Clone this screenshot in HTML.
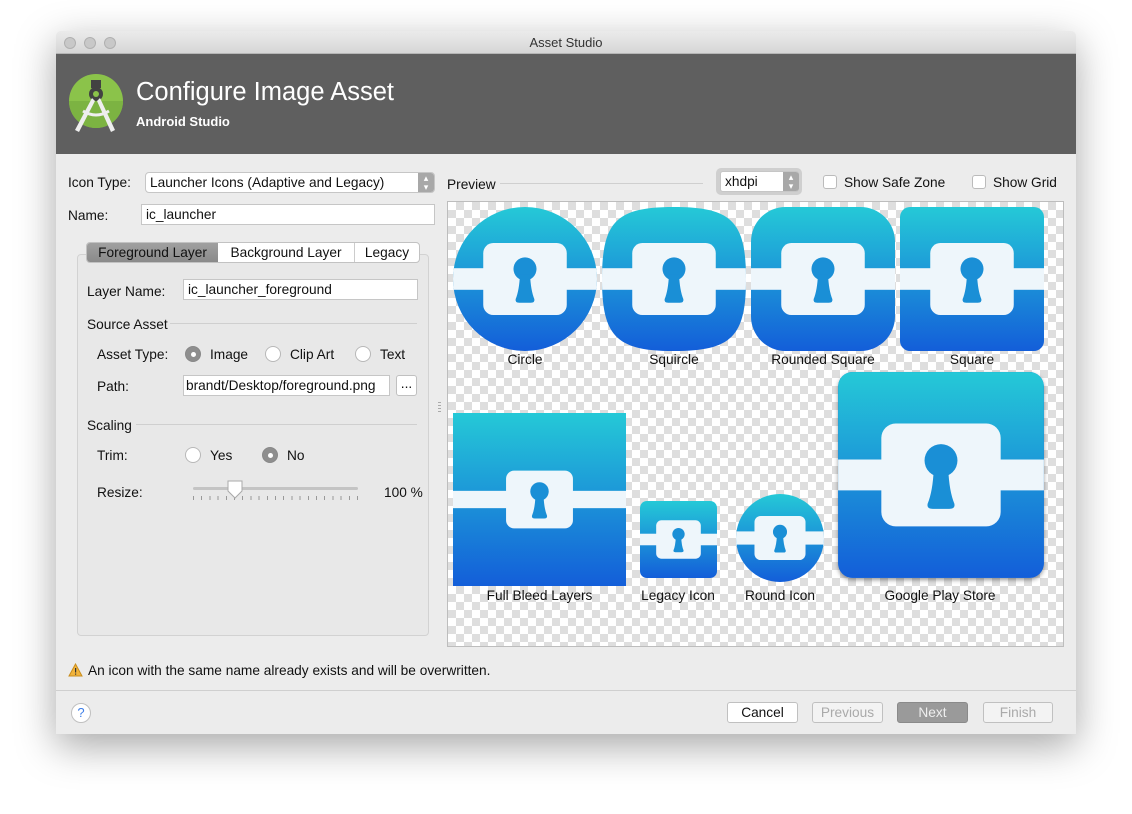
<!DOCTYPE html>
<html><head><meta charset="utf-8"><style>
*{box-sizing:border-box;margin:0;padding:0}
body{width:1132px;height:814px;background:#fff;font-family:"Liberation Sans",sans-serif;font-size:13.7px;color:#111;position:relative;overflow:hidden}
.a{position:absolute}
.win{left:56px;top:31px;width:1020px;height:703px;background:#ececec;box-shadow:0 12px 40px rgba(0,0,0,.35);border-radius:5px 5px 0 0;overflow:hidden}
.tb{left:0;top:0;width:1020px;height:23px;background:linear-gradient(#ebebeb,#d6d6d6);border-bottom:1px solid #b5b5b5;text-align:center;line-height:23px;color:#333;font-size:13px}
.dot{width:12px;height:12px;border-radius:50%;background:#c8c8c8;border:1px solid #b0b0b0;top:6px}
.hdr{left:0;top:23px;width:1020px;height:100px;background:#5f5f5f}
.inp{background:#fff;border:1px solid #c6c6c6;height:21px;line-height:19px;padding-left:4px}
.chk{background:conic-gradient(#dedede 25%,#fff 0 50%,#dedede 0 75%,#fff 0) 0 0/16px 16px}
.radio{width:16px;height:16px;border-radius:50%;background:#fff;border:1px solid #b8b8b8}
.radio.on{background:#8e8e8e;border-color:#888}
.radio.on::after{content:"";position:absolute;left:5px;top:5px;width:5px;height:5px;border-radius:50%;background:#fff}
.btn{height:21px;border:1px solid #c0c0c0;border-radius:3px;background:#fff;text-align:center;line-height:19px}
.lbl{text-align:center}
.sep{height:1px;background:#cfcfcf}
</style></head><body>
<svg width="0" height="0" style="position:absolute">
<defs>
<linearGradient id="g" x1="0" y1="0" x2="0" y2="1"><stop offset="0" stop-color="#25c9d7"/><stop offset="1" stop-color="#135ed9"/></linearGradient>
<g id="fg">
<rect x="-30" y="42.5" width="160" height="15" fill="#eef6fb"/>
<rect x="21" y="25" width="58" height="50" rx="7" fill="#eef6fb"/>
<circle cx="50" cy="43" r="8" fill="#1a8fd6"/>
<path d="M46.5,47 Q46,58 43.5,64 Q43,66.5 46,66.5 L54,66.5 Q57,66.5 56.5,64 Q54,58 53.5,47Z" fill="#1a8fd6"/>
</g>
</defs></svg>

<div class="a win">
 <div class="a tb">Asset Studio</div>
 <div class="a dot" style="left:8px"></div><div class="a dot" style="left:28px"></div><div class="a dot" style="left:48px"></div>
 <div class="a hdr">
  <svg class="a" style="left:13px;top:20px" width="56" height="60" viewBox="0 0 56 60">
   <circle cx="27" cy="27" r="27" fill="#8bc34a"/>
   <path d="M0,27 A27,27 0 0 0 54,27Z" fill="#7cb342"/>
   <rect x="22" y="6" width="10" height="8" fill="#424242"/>
   <circle cx="27" cy="20" r="7" fill="#424242"/><circle cx="27" cy="20" r="3" fill="#8bc34a"/>
   <path d="M23,24 L6,56 L10,58 L26,27Z M31,24 L46,56 L42,58 L28,27Z" fill="#eee"/>
   <path d="M14,37 Q27,45 40,37" stroke="#eee" stroke-width="3" fill="none"/>
  </svg>
  <div class="a" style="left:80px;top:24px;font-size:25.5px;color:#fff">Configure Image Asset</div>
  <div class="a" style="left:80px;top:60px;font-size:13px;color:#fff;font-weight:bold">Android Studio</div>
 </div>
</div>

<!-- left form -->
<div class="a" style="left:68px;top:175px">Icon Type:</div>
<div class="a inp" style="left:145px;top:172px;width:290px;border-radius:4px">Launcher Icons (Adaptive and Legacy)</div>
<div class="a" style="left:418px;top:173px;width:16px;height:19px;background:#a8a8a8;border-radius:0 3px 3px 0;color:#fff;font-size:9px;text-align:center;line-height:9px;padding-top:1px">▴<br>▾</div>
<div class="a" style="left:68px;top:208px">Name:</div>
<div class="a inp" style="left:141px;top:204px;width:294px">ic_launcher</div>

<div class="a" style="left:77px;top:254px;width:352px;height:382px;border:1px solid #d2d2d2;border-radius:4px;background:#e8e8e8"></div>
<div class="a" style="left:86px;top:242px;width:334px;height:21px;border:1px solid #c2c2c2;border-radius:4px;background:#fff;overflow:hidden">
 <div class="a" style="left:0;top:0;width:131px;height:19px;color:#111;text-align:center;line-height:19px;background:linear-gradient(#a0a0a0,#8a8a8a)">Foreground Layer</div>
 <div class="a" style="left:131px;top:0;width:137px;height:19px;text-align:center;line-height:19px;border-right:1px solid #ccc">Background Layer</div>
 <div class="a" style="left:268px;top:0;width:64px;height:19px;text-align:center;line-height:19px">Legacy</div>
</div>
<div class="a" style="left:87px;top:284px">Layer Name:</div>
<div class="a inp" style="left:183px;top:279px;width:235px">ic_launcher_foreground</div>
<div class="a" style="left:87px;top:317px">Source Asset</div>
<div class="a sep" style="left:170px;top:323px;width:247px"></div>
<div class="a" style="left:97px;top:347px">Asset Type:</div>
<div class="a radio on" style="left:185px;top:346px"></div><div class="a" style="left:210px;top:347px">Image</div>
<div class="a radio" style="left:265px;top:346px"></div><div class="a" style="left:290px;top:347px">Clip Art</div>
<div class="a radio" style="left:355px;top:346px"></div><div class="a" style="left:380px;top:347px">Text</div>
<div class="a" style="left:97px;top:379px">Path:</div>
<div class="a inp" style="left:183px;top:375px;width:207px;padding-left:2px;overflow:hidden;white-space:nowrap">brandt/Desktop/foreground.png</div>
<div class="a btn" style="left:396px;top:375px;width:21px;line-height:16px">...</div>
<div class="a" style="left:87px;top:418px">Scaling</div>
<div class="a sep" style="left:136px;top:424px;width:281px"></div>
<div class="a" style="left:97px;top:448px">Trim:</div>
<div class="a radio" style="left:185px;top:447px"></div><div class="a" style="left:210px;top:448px">Yes</div>
<div class="a radio on" style="left:262px;top:447px"></div><div class="a" style="left:287px;top:448px">No</div>
<div class="a" style="left:97px;top:485px">Resize:</div>
<div class="a" style="left:193px;top:487px;width:165px;height:3px;background:#c4c4c4;border-radius:2px"></div>
<div class="a" style="left:193px;top:496px;width:165px;height:4px;background:repeating-linear-gradient(90deg,#999 0 1px,transparent 1px 8.2px)"></div>
<svg class="a" style="left:226px;top:480px" width="18" height="20"><path d="M2,1 H16 V11 L9,18 L2,11Z" fill="#fff" stroke="#aaa"/></svg>
<div class="a" style="left:384px;top:485px">100 %</div>

<!-- preview header -->
<div class="a" style="left:447px;top:177px">Preview</div>
<div class="a sep" style="left:500px;top:183px;width:203px"></div>
<div class="a" style="left:716px;top:168px;width:86px;height:27px;background:#cfcfcf;border-radius:5px"></div>
<div class="a inp" style="left:720px;top:171px;width:79px;border-radius:3px">xhdpi</div>
<div class="a" style="left:783px;top:172px;width:16px;height:19px;background:#a8a8a8;border-radius:0 3px 3px 0;color:#fff;font-size:9px;text-align:center;line-height:9px;padding-top:1px">▴<br>▾</div>
<div class="a" style="left:823px;top:175px;width:14px;height:14px;background:#fff;border:1px solid #bbb;border-radius:3px"></div>
<div class="a" style="left:844px;top:175px">Show Safe Zone</div>
<div class="a" style="left:972px;top:175px;width:14px;height:14px;background:#fff;border:1px solid #bbb;border-radius:3px"></div>
<div class="a" style="left:993px;top:175px">Show Grid</div>

<div class="a chk" style="left:447px;top:201px;width:617px;height:446px;border:1px solid #bdbdbd"></div>
<div class="a" style="left:438px;top:402px;width:3px;height:12px;background:repeating-linear-gradient(#aaa 0 1px,transparent 1px 3px)"></div>

<!-- icons -->
<svg class="a" style="left:453px;top:207px" width="144" height="144" viewBox="0 0 100 100"><clipPath id="c1"><circle cx="50" cy="50" r="50"/></clipPath><g clip-path="url(#c1)"><rect width="100" height="100" fill="url(#g)"/><use href="#fg"/></g></svg>
<svg class="a" style="left:602px;top:207px" width="144" height="144" viewBox="0 0 100 100"><clipPath id="c2"><path d="M50,0 C90,0 100,10 100,50 C100,90 90,100 50,100 C10,100 0,90 0,50 C0,10 10,0 50,0Z"/></clipPath><g clip-path="url(#c2)"><rect width="100" height="100" fill="url(#g)"/><use href="#fg"/></g></svg>
<svg class="a" style="left:751px;top:207px" width="144" height="144" viewBox="0 0 100 100"><clipPath id="c3"><rect width="100" height="100" rx="24"/></clipPath><g clip-path="url(#c3)"><rect width="100" height="100" fill="url(#g)"/><use href="#fg"/></g></svg>
<svg class="a" style="left:900px;top:207px" width="144" height="144" viewBox="0 0 100 100"><clipPath id="c4"><rect width="100" height="100" rx="7"/></clipPath><g clip-path="url(#c4)"><rect width="100" height="100" fill="url(#g)"/><use href="#fg"/></g></svg>
<div class="a lbl" style="left:453px;top:352px;width:144px">Circle</div>
<div class="a lbl" style="left:602px;top:352px;width:144px">Squircle</div>
<div class="a lbl" style="left:751px;top:352px;width:144px">Rounded Square</div>
<div class="a lbl" style="left:900px;top:352px;width:144px">Square</div>

<svg class="a" style="left:453px;top:413px" width="173" height="173" viewBox="-25 -25 150 150"><clipPath id="c8"><rect x="-25" y="-25" width="150" height="150"/></clipPath><g clip-path="url(#c8)"><rect x="-25" y="-25" width="150" height="150" fill="url(#g)"/><use href="#fg"/></g></svg>
<svg class="a" style="left:640px;top:501px" width="77" height="77" viewBox="0 0 100 100"><clipPath id="c5"><rect width="100" height="100" rx="9"/></clipPath><g clip-path="url(#c5)"><rect width="100" height="100" fill="url(#g)"/><use href="#fg"/></g></svg>
<svg class="a" style="left:736px;top:494px" width="88" height="88" viewBox="0 0 100 100"><clipPath id="c6"><circle cx="50" cy="50" r="50"/></clipPath><g clip-path="url(#c6)"><rect width="100" height="100" fill="url(#g)"/><use href="#fg"/></g></svg>
<svg class="a" style="left:834px;top:370px" width="214" height="214" viewBox="-2 -1 104 104"><defs><filter id="sh"><feDropShadow dx="0" dy="1" stdDeviation="1" flood-opacity=".4"/></filter></defs><clipPath id="c7"><rect width="100" height="100" rx="7"/></clipPath><rect width="100" height="100" rx="7" fill="#1565d8" filter="url(#sh)"/><g clip-path="url(#c7)"><rect width="100" height="100" fill="url(#g)"/><use href="#fg"/></g></svg>
<div class="a lbl" style="left:453px;top:588px;width:173px">Full Bleed Layers</div>
<div class="a lbl" style="left:628px;top:588px;width:100px">Legacy Icon</div>
<div class="a lbl" style="left:730px;top:588px;width:100px">Round Icon</div>
<div class="a lbl" style="left:840px;top:588px;width:200px">Google Play Store</div>

<!-- bottom -->
<svg class="a" style="left:68px;top:663px" width="15" height="14"><path d="M7.5,1 L14,13 H1Z" fill="#f1b33b" stroke="#c98d1d"/><rect x="7" y="5" width="1.2" height="4.5" fill="#333"/><rect x="7" y="10.5" width="1.2" height="1.2" fill="#333"/></svg>
<div class="a" style="left:88px;top:663px">An icon with the same name already exists and will be overwritten.</div>
<div class="a sep" style="left:56px;top:690px;width:1020px;background:#cfcfcf"></div>
<div class="a" style="left:71px;top:703px;width:20px;height:20px;border-radius:50%;background:#fff;border:1px solid #c0c0c0;color:#3d7ee8;text-align:center;line-height:18px;font-size:13px">?</div>
<div class="a btn" style="left:727px;top:702px;width:71px">Cancel</div>
<div class="a btn" style="left:812px;top:702px;width:71px;color:#aaa;background:#f3f3f3">Previous</div>
<div class="a btn" style="left:897px;top:702px;width:71px;color:#eee;background:#9a9a9a;border-color:#8a8a8a">Next</div>
<div class="a btn" style="left:983px;top:702px;width:70px;color:#aaa;background:#f3f3f3">Finish</div>
</body></html>
